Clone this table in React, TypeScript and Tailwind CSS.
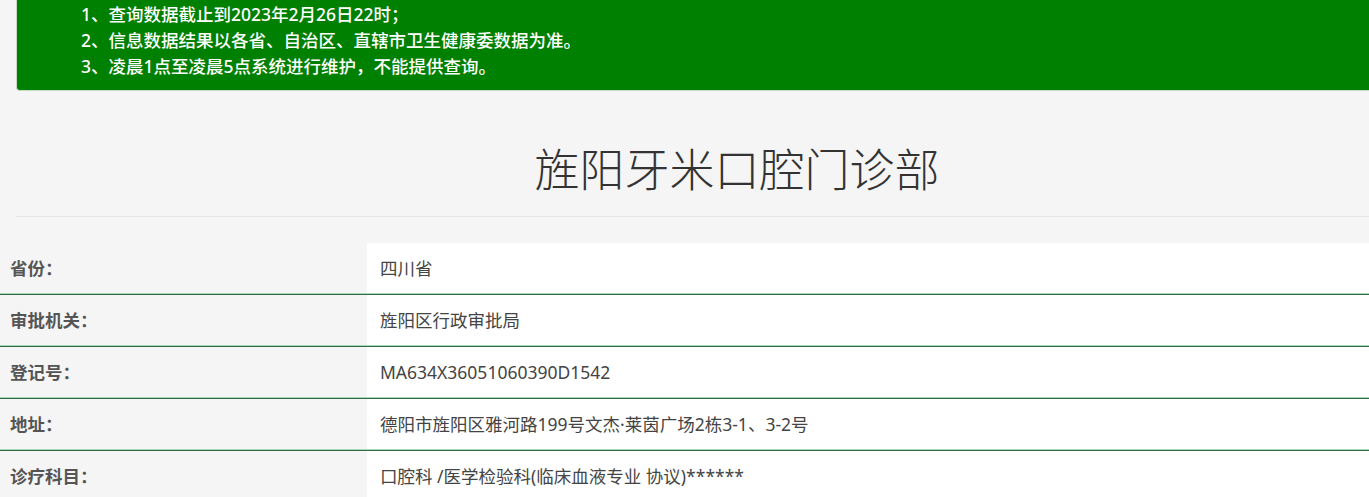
const rows = [
  { label: "省份：", value: "四川省" },
  { label: "审批机关：", value: "旌阳区行政审批局" },
  { label: "登记号：", value: "MA634X36051060390D1542" },
  { label: "地址：", value: "德阳市旌阳区雅河路199号文杰·莱茵广场2栋3-1、3-2号" },
  { label: "诊疗科目：", value: "口腔科 /医学检验科(临床血液专业 协议)******" },
];

const notes = [
  "1、查询数据截止到2023年2月26日22时；",
  "2、信息数据结果以各省、自治区、直辖市卫生健康委数据为准。",
  "3、凌晨1点至凌晨5点系统进行维护，不能提供查询。",
];

export default function App() {
  return (
    <div
      className="w-full h-[497px] overflow-hidden bg-[#f5f5f5]"
      style={{ fontFamily: '"Noto Sans", "Noto Sans CJK SC", sans-serif' }}
    >
      <div className="ml-4 w-[1442px]">
        <div className="rounded-b-[4px] border border-t-0 border-[#c4dcc4] bg-[#008000] pt-px pb-[11px] pl-16 text-[17.5px] leading-[26px] font-medium text-white">
          {notes.map((n) => (
            <div key={n}>{n}</div>
          ))}
        </div>

        <div className="border-b border-[#e8e8e8] pt-[54px] pb-[22px] text-center">
          <h1 className="text-[45px] leading-[49px] font-light text-[#333]">旌阳牙米口腔门诊部</h1>
        </div>
      </div>

      <div className="mt-[26px]">
        {rows.map((r) => (
          <div key={r.label} className="flex h-[52px]">
            <div className="flex w-[367px] shrink-0 items-center border-b border-[#2f6b47] pl-[10px] text-[17.5px] font-bold text-[#555] shadow-[inset_0_-1px_0_#a6dcbc]">
              {r.label}
            </div>
            <div className="flex flex-1 items-center border-b border-[#2f6b47] bg-white pl-[13px] text-[17.5px] text-[#444] shadow-[inset_0_-1px_0_#a6dcbc]">
              {r.value}
            </div>
          </div>
        ))}
      </div>
    </div>
  );
}
